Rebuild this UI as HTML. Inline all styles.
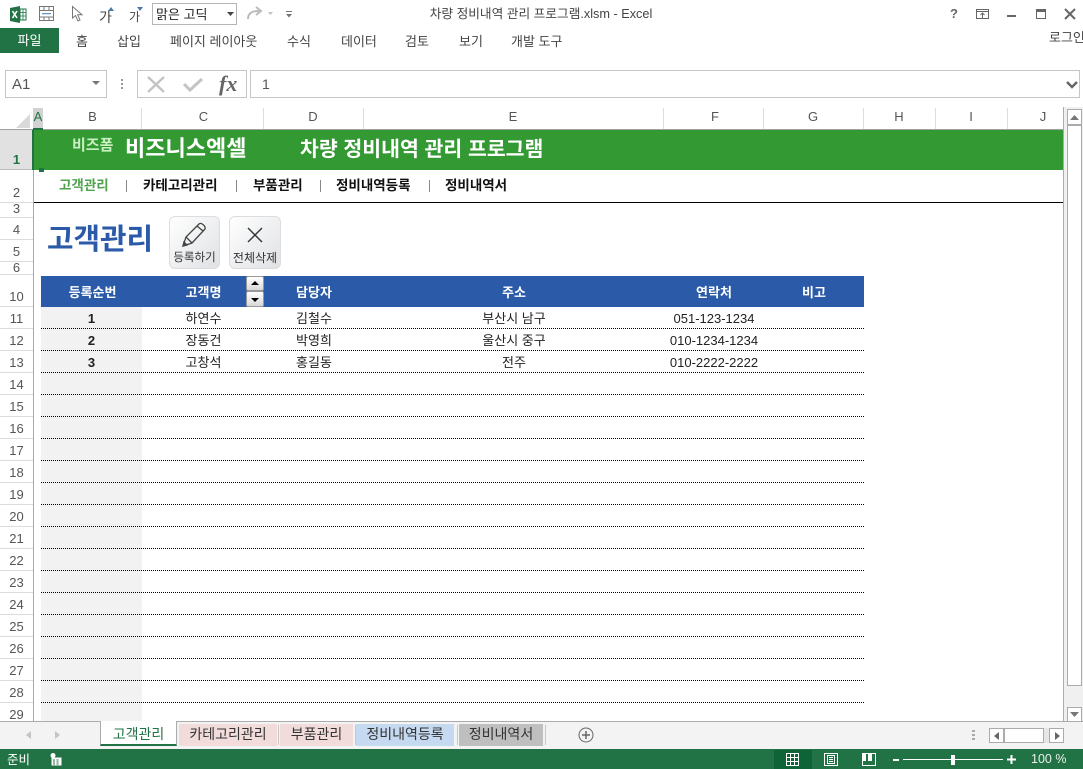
<!DOCTYPE html>
<html lang="ko"><head><meta charset="utf-8"><title>차량 정비내역 관리 프로그램.xlsm - Excel</title>
<style>
html,body{margin:0;padding:0;width:1083px;height:769px;overflow:hidden;background:#fff}
body{position:relative;font-family:"Liberation Sans","Noto Sans CJK KR",sans-serif;font-size:13px;color:#333}
.a{position:absolute;white-space:nowrap;line-height:1}
.c{position:absolute;white-space:nowrap;line-height:1;text-align:center}
.b{position:absolute;box-sizing:border-box}
svg{position:absolute;overflow:visible}
.r{left:0;width:33px;color:#555}
.h{top:110px;color:#555}
.th{top:286px;color:#fff;font-weight:bold}
.td{color:#222}
.n{top:179px;font-size:13.5px;font-weight:bold;color:#111}
.t{top:727px;font-size:14px;color:#333}
.rb{top:35px;color:#444}
</style></head><body>

<!-- title bar -->
<svg style="left:10px;top:6px" width="17" height="17" viewBox="0 0 17 17"><path d="M0 2L10 0V17L0 15Z" fill="#217346"/><rect x="10" y="3" width="6" height="11" fill="#fff" stroke="#217346"/><path d="M10 6.500H16M10 10H16M13 3V14" stroke="#217346" stroke-width=".8"/><path d="M2.500 5L7 12M7 5L2.500 12" stroke="#fff" stroke-width="1.600"/></svg>
<svg style="left:39px;top:6px" width="16" height="16" viewBox="0 0 16 16" fill="none" stroke="#777"><rect x=".5" y=".5" width="14" height="14"/><path d="M.5 4.500H14.500M.5 11H14.500M5 .5V4.500M10 .5V4.500M5 11V14.500M10 11V14.500"/><path d="M3 7.700H12" stroke="#3a78b5"/></svg>
<svg style="left:72px;top:6px" width="12" height="16" viewBox="0 0 12 16" fill="#fff" stroke="#777"><path d="M.5.5V12L3.500 9.500 6 15 8 14 5.700 8.800H10Z"/></svg>
<div class="a" style="left:99px;top:10px;font-size:14px;color:#444">가</div>
<svg style="left:108px;top:7px" width="6" height="4"><path d="M0 4L3 0 6 4Z" fill="#4a7ba8"/></svg>
<div class="a" style="left:129px;top:11px;font-size:12px;color:#444">가</div>
<svg style="left:137px;top:7px" width="6" height="4"><path d="M0 0L3 4 6 0Z" fill="#4a7ba8"/></svg>
<div class="b" style="left:152px;top:3px;width:85px;height:22px;border:1px solid #b5b5b5"></div>
<div class="a" style="left:156px;top:8px;font-size:13px;color:#222">맑은 고딕</div>
<svg style="left:227px;top:12px" width="7" height="4"><path d="M0 0H7L3.500 4Z" fill="#444"/></svg>
<svg style="left:247px;top:7px" width="16" height="13" fill="none" stroke="#bbb" stroke-width="2"><path d="M1 12C1 6 5 4 12 4"/><path d="M9 0L14 4 9 8" fill="none"/></svg>
<svg style="left:268px;top:12px" width="5" height="3"><path d="M0 0H5L2.500 3Z" fill="#c0c0c0"/></svg>
<svg style="left:286px;top:11px" width="6" height="7"><path d="M0 .5H6" stroke="#777"/><path d="M0 3H6L3 6.500Z" fill="#777"/></svg>
<div class="c" style="left:341px;top:8px;width:400px;font-size:12.700px;color:#444">차량 정비내역 관리 프로그램.xlsm - Excel</div>
<div class="a" style="left:950px;top:7px;font-size:13px;font-weight:bold;color:#666">?</div>
<svg style="left:976px;top:9px" width="14" height="11" fill="none" stroke="#666"><rect x=".5" y=".5" width="12" height="9"/><path d="M.5 2.500H12.500"/><path d="M6.500 9V4.500M4.500 6L6.500 4 8.500 6"/></svg>
<div class="b" style="left:1007px;top:15px;width:9px;height:2px;background:#666"></div>
<div class="b" style="left:1036px;top:9px;width:10px;height:10px;border:1px solid #666;border-top-width:3px"></div>
<svg style="left:1065px;top:9px" width="10" height="10" stroke="#666" stroke-width="2"><path d="M0 0L10 10M10 0L0 10"/></svg>

<!-- ribbon tabs -->
<div class="b" style="left:0;top:28px;width:59px;height:25px;background:#217346"></div>
<div class="c" style="left:0;top:34px;width:59px;font-size:13px;color:#fff">파일</div>
<div class="a rb" style="left:76px">홈</div>
<div class="a rb" style="left:117px">삽입</div>
<div class="a rb" style="left:170px">페이지 레이아웃</div>
<div class="a rb" style="left:287px">수식</div>
<div class="a rb" style="left:341px">데이터</div>
<div class="a rb" style="left:405px">검토</div>
<div class="a rb" style="left:459px">보기</div>
<div class="a rb" style="left:511px">개발 도구</div>
<div class="a" style="left:1049px;top:31px;color:#444">로그인</div>

<!-- formula bar -->
<div class="b" style="left:5px;top:70px;width:102px;height:28px;border:1px solid #c6c6c6"></div>
<div class="a" style="left:12px;top:77px;font-size:15px;color:#555">A1</div>
<svg style="left:92px;top:81px" width="8" height="4"><path d="M0 0H8L4 4Z" fill="#777"/></svg>
<div class="b" style="left:121px;top:79px;width:2px;height:2px;background:#999;box-shadow:0 4px #999,0 8px #999"></div>
<div class="b" style="left:137px;top:70px;width:110px;height:28px;border:1px solid #c6c6c6"></div>
<svg style="left:147px;top:77px" width="18" height="15" stroke="#c4c4c4" stroke-width="2.500"><path d="M1 0L17 15M17 0L1 15"/></svg>
<svg style="left:183px;top:78px" width="20" height="14" fill="none" stroke="#c4c4c4" stroke-width="3"><path d="M1 6L7 12 19 1"/></svg>
<div class="a" style="left:219px;top:71px;font:italic bold 22px 'Liberation Serif',serif;color:#666">fx</div>
<div class="b" style="left:250px;top:70px;width:830px;height:28px;border:1px solid #c6c6c6"></div>
<div class="a" style="left:262px;top:77px;font-size:14px;color:#555">1</div>
<svg style="left:1066px;top:81px" width="12" height="8" fill="none" stroke="#666" stroke-width="2.500"><path d="M1 1L6 6 11 1"/></svg>

<!-- column headers -->
<div class="b" style="left:0;top:107px;width:1063px;height:23px;background:#fff;border-bottom:1px solid #a0a0a0"></div>
<svg style="left:16px;top:114px" width="14" height="14"><path d="M14 0V14H0Z" fill="#d9d9d9"/></svg>
<div class="b" style="left:33px;top:108px;width:10px;height:22px;background:#d2d2d2;border-bottom:2px solid #217346"></div>
<div class="c" style="left:33px;top:110px;width:10px;color:#217346;font-size:13px">A</div>
<div class="c h" style="left:43px;width:99px">B</div>
<div class="c h" style="left:143px;width:121px">C</div>
<div class="c h" style="left:263px;width:100px">D</div>
<div class="c h" style="left:363px;width:300px">E</div>
<div class="c h" style="left:665px;width:100px">F</div>
<div class="c h" style="left:763px;width:100px">G</div>
<div class="c h" style="left:863px;width:72px">H</div>
<div class="c h" style="left:935px;width:72px">I</div>
<div class="c h" style="left:1007px;width:72px">J</div>
<div class="b" style="left:141px;top:108px;width:1px;height:21px;background:#ddd"></div>
<div class="b" style="left:263px;top:108px;width:1px;height:21px;background:#ddd"></div>
<div class="b" style="left:363px;top:108px;width:1px;height:21px;background:#ddd"></div>
<div class="b" style="left:663px;top:108px;width:1px;height:21px;background:#ddd"></div>
<div class="b" style="left:763px;top:108px;width:1px;height:21px;background:#ddd"></div>
<div class="b" style="left:863px;top:108px;width:1px;height:21px;background:#ddd"></div>
<div class="b" style="left:935px;top:108px;width:1px;height:21px;background:#ddd"></div>
<div class="b" style="left:1007px;top:108px;width:1px;height:21px;background:#ddd"></div>

<!-- row header -->
<div class="b" style="left:0;top:130px;width:34px;height:591px;border-right:1px solid #a8a8a8;background:repeating-linear-gradient(#fff 0 21px,#dcdcdc 21px 22px) 0 177px no-repeat"></div>
<div class="b" style="left:0;top:130px;width:33px;height:40px;background:#e1e1e1;border-bottom:1px solid #bbb"></div>
<div class="b" style="left:0;top:202px;width:33px;height:1px;background:#dcdcdc"></div>
<div class="b" style="left:0;top:217px;width:33px;height:1px;background:#dcdcdc"></div>
<div class="b" style="left:0;top:239px;width:33px;height:1px;background:#dcdcdc"></div>
<div class="b" style="left:0;top:261px;width:33px;height:1px;background:#dcdcdc"></div>
<div class="b" style="left:0;top:274px;width:33px;height:1px;background:#dcdcdc"></div>
<div class="b" style="left:0;top:306px;width:33px;height:1px;background:#dcdcdc"></div>
<div class="c" style="left:0;top:153px;width:33px;color:#217346;font-weight:bold">1</div>
<div class="c r" style="top:186px">2</div>
<div class="c r" style="top:202px">3</div>
<div class="c r" style="top:223px">4</div>
<div class="c r" style="top:245px">5</div>
<div class="c r" style="top:261px">6</div>
<div class="c r" style="top:290px">10</div>
<div class="c r" style="top:312px">11</div>
<div class="c r" style="top:334px">12</div>
<div class="c r" style="top:356px">13</div>
<div class="c r" style="top:378px">14</div>
<div class="c r" style="top:400px">15</div>
<div class="c r" style="top:422px">16</div>
<div class="c r" style="top:444px">17</div>
<div class="c r" style="top:466px">18</div>
<div class="c r" style="top:488px">19</div>
<div class="c r" style="top:510px">20</div>
<div class="c r" style="top:532px">21</div>
<div class="c r" style="top:554px">22</div>
<div class="c r" style="top:576px">23</div>
<div class="c r" style="top:598px">24</div>
<div class="c r" style="top:620px">25</div>
<div class="c r" style="top:642px">26</div>
<div class="c r" style="top:664px">27</div>
<div class="c r" style="top:686px">28</div>
<div class="c r" style="top:708px">29</div>

<!-- green banner -->
<div class="b" style="left:33px;top:130px;width:1030px;height:40px;background:#339933"></div>
<div class="b" style="left:32px;top:130px;width:2px;height:40px;background:#217346"></div>
<div class="b" style="left:39px;top:168px;width:5px;height:4px;background:#217346"></div>
<div class="a" style="left:72px;top:138px;font-size:15px;font-weight:bold;color:#c8f0c0">비즈폼</div>
<div class="a" style="left:125px;top:138px;font-size:22px;font-weight:bold;color:#fff">비즈니스엑셀</div>
<div class="a" style="left:300px;top:140px;font-size:20.500px;font-weight:bold;color:#fff">차량 정비내역 관리 프로그램</div>

<!-- nav -->
<div class="a n" style="left:59px;color:#4ea24e">고객관리</div>
<div class="b" style="left:126px;top:180px;width:1px;height:12px;background:#888"></div>
<div class="a n" style="left:143px">카테고리관리</div>
<div class="b" style="left:236px;top:180px;width:1px;height:12px;background:#888"></div>
<div class="a n" style="left:253px">부품관리</div>
<div class="b" style="left:320px;top:180px;width:1px;height:12px;background:#888"></div>
<div class="a n" style="left:336px">정비내역등록</div>
<div class="b" style="left:429px;top:180px;width:1px;height:12px;background:#888"></div>
<div class="a n" style="left:445px">정비내역서</div>
<div class="b" style="left:34px;top:202px;width:1029px;height:1px;background:#000"></div>

<!-- heading & buttons -->
<div class="a" style="left:47px;top:226px;font-size:28.800px;font-weight:bold;color:#2b5ba8">고객관리</div>
<div class="b" style="left:169px;top:216px;width:51px;height:53px;border:1px solid #ddd;border-radius:6px;background:linear-gradient(135deg,#fff,#dfe1e4)"></div>
<svg style="left:182px;top:222px" width="26" height="26" fill="none" stroke="#444" stroke-width="1.300"><path d="M1 24L4 15 17 2C19 0 24 4 23 7L10 21Z"/><path d="M4 15L10 21M15 4L21 9"/><path d="M1 24L5 23 2 20Z" fill="#444"/></svg>
<div class="c" style="left:169px;top:253px;width:51px;font-size:11.500px;color:#333">등록하기</div>
<div class="b" style="left:229px;top:216px;width:52px;height:53px;border:1px solid #ddd;border-radius:6px;background:linear-gradient(135deg,#fff,#dfe1e4)"></div>
<svg style="left:247px;top:227px" width="16" height="16" stroke="#333" stroke-width="1.400"><path d="M1 1L15 15M15 1L1 15"/></svg>
<div class="c" style="left:229px;top:252px;width:52px;font-size:12px;color:#333">전체삭제</div>

<!-- table -->
<div class="b" style="left:41px;top:276px;width:823px;height:31px;background:#2b5ba8"></div>
<div class="b" style="left:41px;top:307px;width:101px;height:414px;background:#f2f2f2"></div>
<div class="b" style="left:41px;top:328px;width:823px;height:393px;background:repeating-linear-gradient(90deg,#000 0 1px,transparent 1px 2px) 0 0/100% 1px no-repeat,repeating-linear-gradient(90deg,#000 0 1px,transparent 1px 2px) 0 22px/100% 1px no-repeat,repeating-linear-gradient(90deg,#000 0 1px,transparent 1px 2px) 0 44px/100% 1px no-repeat,repeating-linear-gradient(90deg,#000 0 1px,transparent 1px 2px) 0 66px/100% 1px no-repeat,repeating-linear-gradient(90deg,#000 0 1px,transparent 1px 2px) 0 88px/100% 1px no-repeat,repeating-linear-gradient(90deg,#000 0 1px,transparent 1px 2px) 0 110px/100% 1px no-repeat,repeating-linear-gradient(90deg,#000 0 1px,transparent 1px 2px) 0 132px/100% 1px no-repeat,repeating-linear-gradient(90deg,#000 0 1px,transparent 1px 2px) 0 154px/100% 1px no-repeat,repeating-linear-gradient(90deg,#000 0 1px,transparent 1px 2px) 0 176px/100% 1px no-repeat,repeating-linear-gradient(90deg,#000 0 1px,transparent 1px 2px) 0 198px/100% 1px no-repeat,repeating-linear-gradient(90deg,#000 0 1px,transparent 1px 2px) 0 220px/100% 1px no-repeat,repeating-linear-gradient(90deg,#000 0 1px,transparent 1px 2px) 0 242px/100% 1px no-repeat,repeating-linear-gradient(90deg,#000 0 1px,transparent 1px 2px) 0 264px/100% 1px no-repeat,repeating-linear-gradient(90deg,#000 0 1px,transparent 1px 2px) 0 286px/100% 1px no-repeat,repeating-linear-gradient(90deg,#000 0 1px,transparent 1px 2px) 0 308px/100% 1px no-repeat,repeating-linear-gradient(90deg,#000 0 1px,transparent 1px 2px) 0 330px/100% 1px no-repeat,repeating-linear-gradient(90deg,#000 0 1px,transparent 1px 2px) 0 352px/100% 1px no-repeat,repeating-linear-gradient(90deg,#000 0 1px,transparent 1px 2px) 0 374px/100% 1px no-repeat"></div>

<div class="c th" style="left:42px;width:101px">등록순번</div>
<div class="c th" style="left:143px;width:121px">고객명</div>
<div class="c th" style="left:264px;width:100px">담당자</div>
<div class="c th" style="left:364px;width:300px">주소</div>
<div class="c th" style="left:664px;width:100px">연락처</div>
<div class="c th" style="left:764px;width:100px">비고</div>

<div class="b" style="left:246px;top:276px;width:18px;height:15px;background:linear-gradient(#fff,#d8d8d8);border:1px solid #999;border-radius:2px"></div>
<svg style="left:251px;top:281px" width="8" height="4"><path d="M0 4L4 0 8 4Z" fill="#000"/></svg>
<div class="b" style="left:246px;top:291px;width:18px;height:16px;background:linear-gradient(#fff,#d8d8d8);border:1px solid #999;border-radius:2px"></div>
<svg style="left:251px;top:298px" width="8" height="4"><path d="M0 0H8L4 4Z" fill="#000"/></svg>

<div class="c td" style="left:41px;top:312px;width:101px;font-weight:bold">1</div>
<div class="c td" style="left:143px;top:312px;width:121px">하연수</div>
<div class="c td" style="left:264px;top:312px;width:100px">김철수</div>
<div class="c td" style="left:364px;top:312px;width:300px">부산시 남구</div>
<div class="c td" style="left:664px;top:312px;width:100px">051-123-1234</div>
<div class="c td" style="left:41px;top:334px;width:101px;font-weight:bold">2</div>
<div class="c td" style="left:143px;top:334px;width:121px">장동건</div>
<div class="c td" style="left:264px;top:334px;width:100px">박영희</div>
<div class="c td" style="left:364px;top:334px;width:300px">울산시 중구</div>
<div class="c td" style="left:664px;top:334px;width:100px">010-1234-1234</div>
<div class="c td" style="left:41px;top:356px;width:101px;font-weight:bold">3</div>
<div class="c td" style="left:143px;top:356px;width:121px">고창석</div>
<div class="c td" style="left:264px;top:356px;width:100px">홍길동</div>
<div class="c td" style="left:364px;top:356px;width:300px">전주</div>
<div class="c td" style="left:664px;top:356px;width:100px">010-2222-2222</div>

<!-- vertical scrollbar -->
<div class="b" style="left:1063px;top:107px;width:1px;height:615px;background:#ababab"></div>
<div class="b" style="left:1064px;top:107px;width:19px;height:615px;background:#f0f0f0"></div>
<div class="b" style="left:1067px;top:109px;width:15px;height:16px;background:#fff;border:1px solid #ababab"></div>
<svg style="left:1070px;top:115px" width="9" height="5"><path d="M0 5L4.500 0 9 5Z" fill="#777"/></svg>
<div class="b" style="left:1067px;top:125px;width:15px;height:561px;background:#fff;border:1px solid #ababab"></div>
<div class="b" style="left:1067px;top:707px;width:15px;height:15px;background:#fff;border:1px solid #ababab"></div>
<svg style="left:1070px;top:712px" width="9" height="5"><path d="M0 0H9L4.500 5Z" fill="#777"/></svg>

<!-- sheet tabs -->
<div class="b" style="left:0;top:721px;width:1083px;height:28px;background:#f3f3f3;border-top:1px solid #ababab"></div>
<svg style="left:26px;top:731px" width="5" height="8"><path d="M5 0V8L0 4Z" fill="#c4c4c4"/></svg>
<svg style="left:55px;top:731px" width="5" height="8"><path d="M0 0V8L5 4Z" fill="#c4c4c4"/></svg>
<div class="b" style="left:100px;top:721px;width:77px;height:25px;background:#fff;border:1px solid #ababab;border-top:0;border-bottom:2px solid #217346"></div>
<div class="c t" style="left:100px;width:77px;color:#217346">고객관리</div>
<div class="b" style="left:179px;top:724px;width:98px;height:22px;background:#f2dcdb"></div>
<div class="c t" style="left:179px;width:98px">카테고리관리</div>
<div class="b" style="left:280px;top:724px;width:73px;height:22px;background:#f2dcdb"></div>
<div class="c t" style="left:280px;width:73px">부품관리</div>
<div class="b" style="left:356px;top:724px;width:98px;height:22px;background:#c5d9f1"></div>
<div class="c t" style="left:356px;width:98px">정비내역등록</div>
<div class="b" style="left:459px;top:724px;width:84px;height:22px;background:#bfbfbf"></div>
<div class="c t" style="left:459px;width:84px">정비내역서</div>
<div class="b" style="left:278px;top:725px;width:1px;height:20px;background:#c8c8c8"></div>
<div class="b" style="left:355px;top:725px;width:1px;height:20px;background:#c8c8c8"></div>
<div class="b" style="left:457px;top:725px;width:1px;height:20px;background:#c8c8c8"></div>
<div class="b" style="left:545px;top:725px;width:1px;height:20px;background:#c8c8c8"></div>
<svg style="left:578px;top:727px" width="16" height="16" fill="none" stroke="#666"><circle cx="8" cy="8" r="7"/><path d="M8 4V12M4 8H12" stroke-width="1.500"/></svg>
<div class="b" style="left:972px;top:730px;width:3px;height:2px;background:#aaa;box-shadow:0 4px #aaa,0 8px #aaa"></div>
<div class="b" style="left:989px;top:728px;width:15px;height:15px;background:#fff;border:1px solid #ababab"></div>
<svg style="left:994px;top:732px" width="5" height="8"><path d="M5 0V8L0 4Z" fill="#666"/></svg>
<div class="b" style="left:1004px;top:728px;width:40px;height:15px;background:#fff;border:1px solid #ababab"></div>
<div class="b" style="left:1044px;top:728px;width:5px;height:15px;background:#e6e6e6"></div>
<div class="b" style="left:1049px;top:728px;width:15px;height:15px;background:#fff;border:1px solid #ababab"></div>
<svg style="left:1055px;top:732px" width="5" height="8"><path d="M0 0V8L5 4Z" fill="#666"/></svg>

<!-- status bar -->
<div class="b" style="left:0;top:749px;width:1083px;height:20px;background:#217346"></div>
<div class="a" style="left:7px;top:754px;font-size:12.500px;color:#fff">준비</div>
<svg style="left:50px;top:753px" width="12" height="13"><circle cx="3" cy="2.500" r="2.500" fill="#fff"/><rect x="1.500" y="4.500" width="10" height="8" fill="#fff"/><path d="M3 7H5M6.500 7H8.500M3 9H5M6.500 9H8.500M3 11H5M6.500 11H8.500" stroke="#217346"/></svg>
<div class="b" style="left:774px;top:750px;width:38px;height:19px;background:#0f6437"></div>
<svg style="left:786px;top:753px" width="13" height="13" fill="none" stroke="#fff"><rect x=".5" y=".5" width="12" height="12"/><path d="M4.500 .5V12.500M8.500 .5V12.500M.5 4.500H12.500M.5 8.500H12.500"/></svg>
<svg style="left:824px;top:753px" width="14" height="13" fill="none" stroke="#fff"><rect x=".5" y=".5" width="13" height="12"/><rect x="3.500" y="2.500" width="7" height="8"/><path d="M5 4.500H9M5 6.500H9M5 8.500H9"/></svg>
<svg style="left:862px;top:753px" width="14" height="13"><rect x=".5" y=".5" width="13" height="12" fill="none" stroke="#fff"/><rect x="1" y="1" width="3" height="7" fill="#fff"/><rect x="6" y="1" width="4" height="7" fill="#fff"/></svg>
<div class="b" style="left:893px;top:759px;width:6px;height:2px;background:#fff"></div>
<div class="b" style="left:903px;top:759px;width:100px;height:1px;background:#fff"></div>
<div class="b" style="left:951px;top:755px;width:4px;height:10px;background:#fff"></div>
<svg style="left:1007px;top:755px" width="9" height="9"><path d="M3.500 0H5.500V3.500H9V5.500H5.500V9H3.500V5.500H0V3.500H3.500Z" fill="#fff"/></svg>
<div class="a" style="left:1031px;top:753px;font-size:12.500px;color:#e8f0ea">100 %</div>

</body></html>
